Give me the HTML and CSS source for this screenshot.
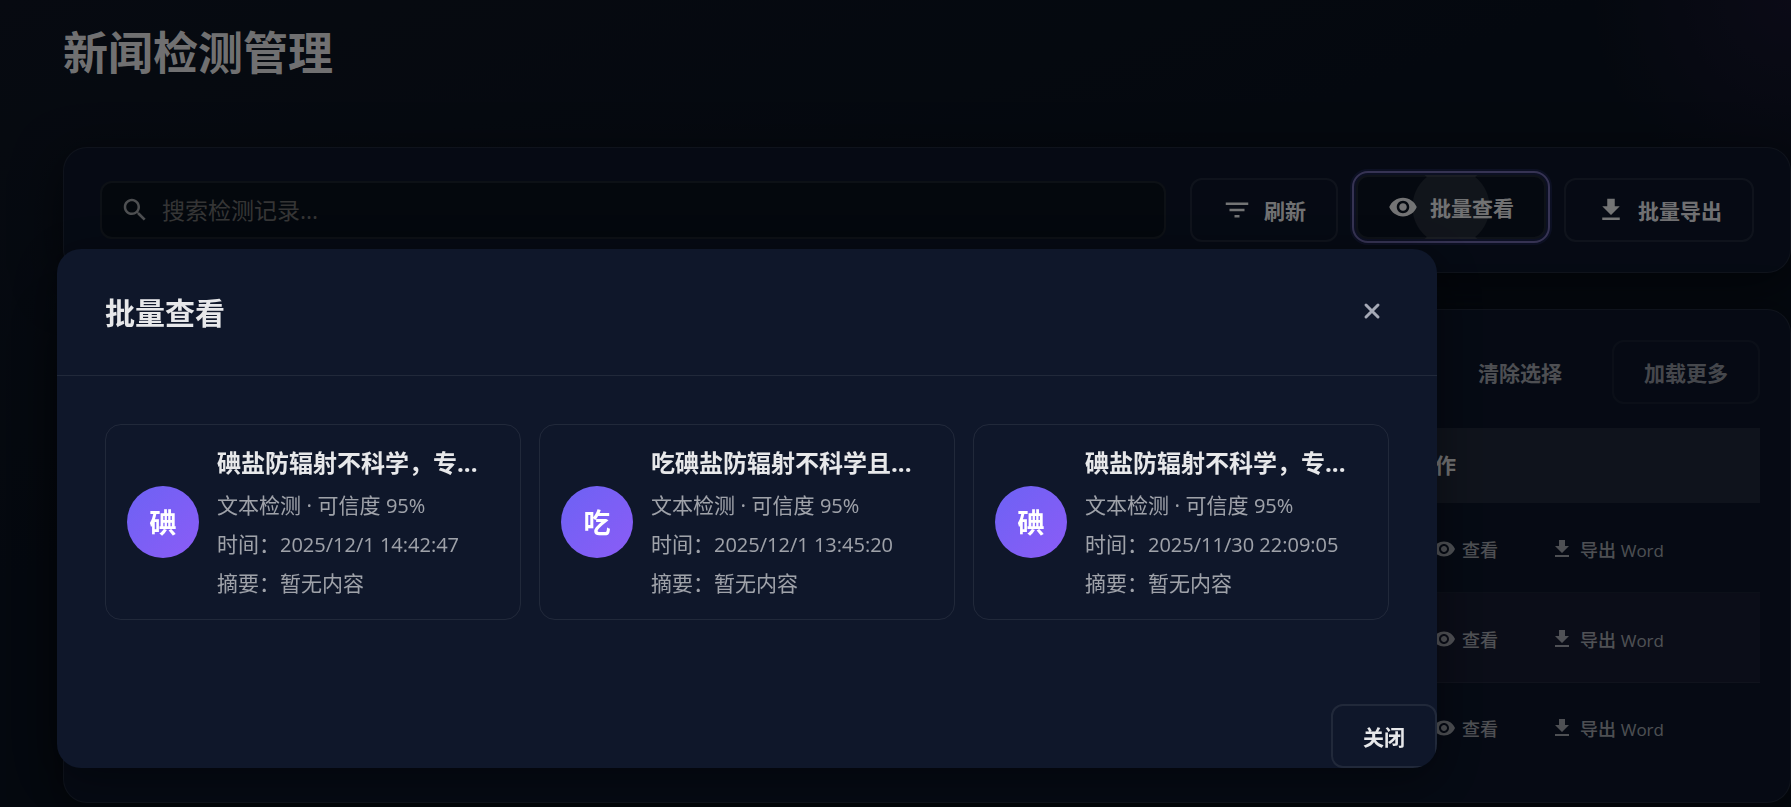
FILE: index.html
```
<!DOCTYPE html>
<html lang="zh-CN">
<head>
    <meta charset="UTF-8">
    <meta name="viewport" content="width=device-width, initial-scale=1.0">
    <title>新闻检测管理</title>
    <link rel="stylesheet" href="styles.css">
</head>
<body>
    <!-- Shared icons -->
    <svg class="sprite" aria-hidden="true">
        <symbol id="icon-search" viewBox="0 0 24 24"><path d="M15.5 14h-.79l-.28-.27C15.41 12.59 16 11.11 16 9.5 16 5.91 13.09 3 9.5 3S3 5.91 3 9.5 5.91 16 9.5 16c1.61 0 3.09-.59 4.23-1.57l.27.28v.79l5 4.99L20.49 19l-4.99-5zm-6 0C7.01 14 5 11.99 5 9.5S7.01 5 9.5 5 14 7.01 14 9.5 11.99 14 9.5 14z"/></symbol>
        <symbol id="icon-filter" viewBox="0 0 24 24"><path d="M10 18h4v-2h-4v2zM3 6v2h18V6H3zm3 7h12v-2H6v2z"/></symbol>
        <symbol id="icon-eye" viewBox="0 0 24 24"><path d="M12 4.5C7 4.5 2.73 7.61 1 12c1.73 4.39 6 7.5 11 7.5s9.27-3.11 11-7.5c-1.73-4.39-6-7.5-11-7.5zM12 17c-2.76 0-5-2.24-5-5s2.24-5 5-5 5 2.24 5 5-2.24 5-5 5zm0-8c-1.66 0-3 1.34-3 3s1.34 3 3 3 3-1.34 3-3-1.34-3-3-3z"/></symbol>
        <symbol id="icon-download" viewBox="0 0 24 24"><path d="M19 9h-4V3H9v6H5l7 7 7-7zM5 18v2h14v-2H5z"/></symbol>
    </svg>

    <main class="page">
        <h1>新闻检测管理</h1>

        <section class="card toolbar">
            <label class="search-box">
                <svg class="search-icon"><use href="#icon-search"/></svg>
                <input type="text" placeholder="搜索检测记录..." aria-label="搜索检测记录">
            </label>
            <div class="toolbar-actions">
                <button class="btn"><svg><use href="#icon-filter"/></svg>刷新</button>
                <button class="btn active"><svg><use href="#icon-eye"/></svg>批量查看</button>
                <button class="btn"><svg><use href="#icon-download"/></svg>批量导出</button>
            </div>
        </section>

        <section class="card records">
            <div class="records-actions">
                <button class="btn btn-text">清除选择</button>
                <button class="btn" disabled>加载更多</button>
            </div>
            <table>
                <thead>
                    <tr><th></th><th class="actions-col">操作</th></tr>
                </thead>
                <tbody>
                    <tr>
                        <td></td>
                        <td>
                            <div class="row-actions">
                                <button class="row-btn"><svg><use href="#icon-eye"/></svg>查看</button>
                                <button class="row-btn"><svg><use href="#icon-download"/></svg><span>导出 <span class="latin">Word</span></span></button>
                            </div>
                        </td>
                    </tr>
                    <tr>
                        <td></td>
                        <td>
                            <div class="row-actions">
                                <button class="row-btn"><svg><use href="#icon-eye"/></svg>查看</button>
                                <button class="row-btn"><svg><use href="#icon-download"/></svg><span>导出 <span class="latin">Word</span></span></button>
                            </div>
                        </td>
                    </tr>
                    <tr>
                        <td></td>
                        <td>
                            <div class="row-actions">
                                <button class="row-btn"><svg><use href="#icon-eye"/></svg>查看</button>
                                <button class="row-btn"><svg><use href="#icon-download"/></svg><span>导出 <span class="latin">Word</span></span></button>
                            </div>
                        </td>
                    </tr>
                </tbody>
            </table>
        </section>
    </main>

    <div class="overlay">
        <div class="modal" role="dialog" aria-modal="true" aria-labelledby="modalTitle">
            <header class="modal-header">
                <h2 id="modalTitle">批量查看</h2>
                <button class="modal-close" aria-label="关闭">
                    <svg viewBox="0 0 18 18"><path d="M3 3l12 12M15 3L3 15"/></svg>
                </button>
            </header>
            <div class="modal-body">
                <article class="record">
                    <div class="avatar">碘</div>
                    <div class="record-info">
                        <h3>碘盐防辐射不科学，专...</h3>
                        <p>文本检测 · 可信度 <span class="num">95%</span></p>
                        <p>时间：<span class="num">2025/12/1 14:42:47</span></p>
                        <p>摘要：暂无内容</p>
                    </div>
                </article>
                <article class="record">
                    <div class="avatar">吃</div>
                    <div class="record-info">
                        <h3>吃碘盐防辐射不科学且...</h3>
                        <p>文本检测 · 可信度 <span class="num">95%</span></p>
                        <p>时间：<span class="num">2025/12/1 13:45:20</span></p>
                        <p>摘要：暂无内容</p>
                    </div>
                </article>
                <article class="record">
                    <div class="avatar">碘</div>
                    <div class="record-info">
                        <h3>碘盐防辐射不科学，专...</h3>
                        <p>文本检测 · 可信度 <span class="num">95%</span></p>
                        <p>时间：<span class="num">2025/11/30 22:09:05</span></p>
                        <p>摘要：暂无内容</p>
                    </div>
                </article>
            </div>
            <footer class="modal-footer">
                <button class="btn">关闭</button>
            </footer>
        </div>
    </div>
</body>
</html>
```
FILE: styles.css
```
* {
    margin: 0;
    padding: 0;
    box-sizing: border-box;
}

:root {
    --text: rgba(255, 255, 255, 0.9);
    --muted: rgba(255, 255, 255, 0.6);
    --border: rgba(255, 255, 255, 0.08);
}

body {
    min-height: 100vh;
    font-family: "Open Sans", "Noto Sans CJK SC", sans-serif;
    color: var(--text);
    background:
        radial-gradient(circle at 100% 0, rgba(139, 60, 180, 0.1), transparent 200px),
        linear-gradient(160deg, #0e1522 0%, #09111e 40%, #09111e 100%);
}

button, input {
    font-family: inherit;
    color: inherit;
}

button {
    background: none;
    border: none;
    cursor: pointer;
}

svg {
    fill: currentColor;
    flex-shrink: 0;
}

.sprite {
    position: absolute;
    width: 0;
    height: 0;
}

.page {
    display: flex;
    flex-direction: column;
    gap: 36px;
    padding: 20px 0 0 63px;
}

h1 {
    font-size: 45px;
    line-height: 66px;
    font-weight: 700;
    margin-bottom: 25px;
}

.card {
    background: #0c1528;
    border: 1px solid var(--border);
    border-radius: 24px;
    box-shadow: 0 12px 48px rgba(0, 0, 0, 0.5);
}

/* Toolbar */
.toolbar {
    display: flex;
    align-items: center;
    gap: 24px;
    min-height: 126px;
    padding: 30px 36px;
}

.search-box {
    flex: 1;
    display: flex;
    align-items: center;
    gap: 12px;
    height: 58px;
    padding: 0 18px;
    background: #08101b;
    border: 2px solid var(--border);
    border-radius: 12px;
}

.search-icon {
    width: 30px;
    height: 30px;
    color: var(--muted);
}

.search-box input {
    flex: 1;
    background: none;
    border: none;
    outline: none;
    font-size: 23px;
    line-height: 30px;
}

.search-box input::placeholder {
    color: #6b6b6b;
}

.toolbar-actions {
    display: flex;
    gap: 18px;
}

.btn {
    display: flex;
    align-items: center;
    gap: 12px;
    height: 64px;
    padding: 0 30px;
    border: 2px solid var(--border);
    border-radius: 12px;
    font-size: 21px;
    font-weight: 600;
    white-space: nowrap;
}

.btn svg {
    width: 30px;
    height: 30px;
}

.btn:disabled {
    opacity: 0.6;
    color: var(--text);
}

.btn.active {
    transform: translateY(-3px);
    outline: 2px solid #6c66a6;
    outline-offset: 2px;
    box-shadow: 0 0 0 6px rgba(99, 102, 241, 0.15);
    background: radial-gradient(circle, rgba(255, 255, 255, 0.1) 38px, transparent 39px), #0a1220;
}

.btn-text {
    border-color: transparent;
    color: var(--muted);
}

/* Records */
.records {
    padding: 30px 30px 32px;
}

.records-actions {
    display: flex;
    justify-content: flex-end;
    gap: 18px;
    margin-bottom: 24px;
}

table {
    width: 100%;
    border-collapse: separate;
    border-spacing: 0;
}

th {
    height: 75px;
    padding: 0 24px 3px;
    text-align: left;
    font-size: 21px;
    font-weight: 700;
    background: rgba(255, 255, 255, 0.08);
}

.actions-col {
    width: 370px;
}

td {
    height: 90px;
    padding: 3px 24px 0;
    border-bottom: 1px solid rgba(255, 255, 255, 0.05);
}

tbody tr:nth-child(2) td {
    background: rgba(190, 130, 190, 0.06);
}

tbody tr:last-child td {
    height: 87px;
    border-bottom: none;
}

.row-actions {
    display: flex;
    gap: 16px;
}

.row-btn {
    display: flex;
    align-items: center;
    gap: 6px;
    padding: 9px 18px;
    font-size: 18px;
    font-weight: 500;
    color: var(--muted);
    white-space: nowrap;
}

.row-btn svg {
    width: 24px;
    height: 24px;
}

.latin {
    font-size: 17px;
    font-weight: 400;
}

/* Modal */
.overlay {
    position: fixed;
    inset: 0;
    padding: 249px 354px 39px 57px;
    background: rgba(0, 0, 0, 0.5);
}

.modal {
    background: #0f172a;
    border-radius: 24px;
    overflow: hidden;
    box-shadow: 0 12px 48px rgba(0, 0, 0, 0.4);
}

.modal-header {
    display: flex;
    align-items: center;
    justify-content: space-between;
    height: 127px;
    padding: 0 48px 2px;
    border-bottom: 1px solid var(--border);
}

.modal-header h2 {
    font-size: 30px;
    font-weight: 700;
}

.modal-close {
    display: flex;
    align-items: center;
    justify-content: center;
    width: 34px;
    height: 34px;
    color: #a5a9b6;
}

.modal-close svg {
    width: 18px;
    height: 18px;
    stroke: currentColor;
    stroke-width: 3;
    stroke-linecap: round;
}

.modal-body {
    display: grid;
    grid-template-columns: repeat(3, 1fr);
    gap: 18px;
    padding: 48px;
    margin-bottom: 36px;
}

.record {
    display: flex;
    align-items: center;
    gap: 18px;
    min-height: 196px;
    padding: 0 21px;
    border: 1px solid var(--border);
    border-radius: 16px;
}

.avatar {
    display: flex;
    align-items: center;
    justify-content: center;
    flex-shrink: 0;
    width: 72px;
    height: 72px;
    padding-bottom: 2px;
    border-radius: 50%;
    background: linear-gradient(135deg, #6d62f4, #8b5cf6);
    color: #fff;
    font-size: 27px;
    font-weight: 700;
}

.record-info {
    min-width: 0;
    padding-top: 4px;
    white-space: nowrap;
}

.record-info h3 {
    font-size: 24px;
    line-height: 36px;
    font-weight: 700;
    margin-bottom: 5px;
}

.record-info p {
    font-size: 21px;
    line-height: 39px;
    color: var(--muted);
}

.num {
    font-size: 20px;
}

.modal-footer {
    display: flex;
    justify-content: flex-end;
}
```
